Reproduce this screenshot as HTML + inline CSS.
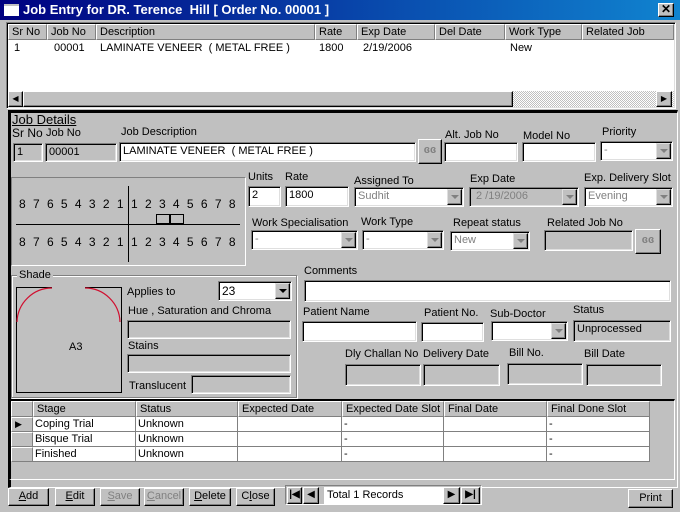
<!DOCTYPE html>
<html><head><meta charset="utf-8"><style>
*{box-sizing:border-box;margin:0;padding:0}
body{width:680px;height:512px;background:#c0c0c0;font-family:"Liberation Sans",Arial,sans-serif;font-size:11px;color:#000;position:relative;overflow:hidden}
.a{position:absolute;white-space:nowrap}
.f{position:absolute;background:#fff;border-top:1px solid #808080;border-left:1px solid #808080;border-right:1px solid #fff;border-bottom:1px solid #fff;box-shadow:inset 1px 1px 0 #000,inset -1px -1px 0 #dfdfdf;padding:2px 0 0 3px;font-size:11px;white-space:nowrap;overflow:hidden}
.g{background:#c0c0c0}
.b{position:absolute;background:#c0c0c0;border-top:1px solid #fff;border-left:1px solid #fff;border-right:1px solid #000;border-bottom:1px solid #000;box-shadow:inset -1px -1px 0 #808080;text-align:center;font-size:11px}
.cb{position:absolute;right:1px;top:1px;bottom:1px;width:15px;background:#c0c0c0;border-top:1px solid #dfdfdf;border-left:1px solid #dfdfdf;border-right:1px solid #000;border-bottom:1px solid #000;box-shadow:inset -1px -1px 0 #808080}
.cb:after{content:"";position:absolute;left:3px;top:5px;border-left:4px solid transparent;border-right:4px solid transparent;border-top:4px solid #808080}
.cb.k:after{border-top-color:#000}
.gr{color:#808080}
.h{position:absolute;background:#c0c0c0;border-top:1px solid #fff;border-left:1px solid #fff;border-right:1px solid #808080;border-bottom:1px solid #808080;padding:1px 0 0 3px;white-space:nowrap;overflow:hidden}
.c{position:absolute;border-right:1px solid #808080;border-bottom:1px solid #808080;background:#fff;padding:1px 0 0 2px;white-space:nowrap;overflow:hidden}
.tr{font-size:12px;letter-spacing:7.3px}
</style></head><body>
<div class="a" style="left:0;top:0;width:680px;height:20px;background:linear-gradient(90deg,#000080,#1084d0)"></div>
<div class="a" style="left:4px;top:4px;width:15px;height:12px;background:#fff;border-top:2px solid #c0c0c0"></div>
<div class="a" style="left:23px;top:2px;color:#fff;font-weight:bold;font-size:13px">Job Entry for DR. Terence&nbsp; Hill [ Order No. 00001 ]</div>
<div class="b" style="left:658px;top:3px;width:16px;height:14px;font-weight:bold;font-size:12px;line-height:11px">✕</div>
<div class="f" style="left:6px;top:22px;width:670px;height:87px;padding:0"></div>
<div class="h" style="left:8px;top:24px;width:39px;height:16px">Sr No</div>
<div class="h" style="left:47px;top:24px;width:49px;height:16px">Job No</div>
<div class="h" style="left:96px;top:24px;width:219px;height:16px">Description</div>
<div class="h" style="left:315px;top:24px;width:42px;height:16px">Rate</div>
<div class="h" style="left:357px;top:24px;width:78px;height:16px">Exp Date</div>
<div class="h" style="left:435px;top:24px;width:70px;height:16px">Del Date</div>
<div class="h" style="left:505px;top:24px;width:77px;height:16px">Work Type</div>
<div class="h" style="left:582px;top:24px;width:92px;height:16px">Related Job</div>
<div class="a" style="left:14px;top:42px">1</div>
<div class="a" style="left:54px;top:42px">00001</div>
<div class="a" style="left:100px;top:42px">LAMINATE VENEER&nbsp; ( METAL FREE )</div>
<div class="a" style="left:319px;top:42px">1800</div>
<div class="a" style="left:363px;top:42px">2/19/2006</div>
<div class="a" style="left:510px;top:42px">New</div>
<div class="a" style="left:8px;top:91px;width:666px;height:16px;background:repeating-conic-gradient(#c0c0c0 0 25%,#fff 0 50%) 0 0/2px 2px"></div>
<div class="b" style="left:8px;top:91px;width:15px;height:16px;font-size:8px;line-height:13px">◀</div>
<div class="b" style="left:23px;top:91px;width:490px;height:16px"></div>
<div class="b" style="left:656px;top:91px;width:16px;height:16px;font-size:8px;line-height:13px">▶</div>
<div class="a" style="left:8px;top:110px;width:670px;height:378px;border-top:3px solid #000;border-left:3px solid #000;border-right:1px solid #fff;border-bottom:1px solid #fff"></div>
<div class="a" style="left:12px;top:112px;font-size:13px;text-decoration:underline">Job Details</div>
<div class="a" style="left:12px;top:126px;font-size:12px">Sr No</div>
<div class="a" style="left:46px;top:127px">Job No</div>
<div class="f g" style="left:13px;top:143px;width:30px;height:19px">1</div>
<div class="f g" style="left:45px;top:143px;width:72px;height:19px">00001</div>
<div class="a" style="left:121px;top:126px">Job Description</div>
<div class="f" style="left:119px;top:142px;width:297px;height:20px">LAMINATE VENEER&nbsp; ( METAL FREE )</div>
<div class="b gr" style="left:418px;top:139px;width:24px;height:25px;line-height:21px;font-weight:bold">ɞɞ</div>
<div class="a" style="left:445px;top:129px">Alt. Job No</div>
<div class="f" style="left:444px;top:142px;width:74px;height:20px"></div>
<div class="a" style="left:523px;top:130px">Model No</div>
<div class="f" style="left:522px;top:142px;width:74px;height:20px"></div>
<div class="a" style="left:602px;top:126px">Priority</div>
<div class="f gr" style="left:600px;top:141px;width:73px;height:20px">-<div class="cb"></div></div>
<div class="a" style="left:11px;top:177px;width:235px;height:89px;border:1px solid #fff;border-top-color:#808080;border-left-color:#808080"></div>
<div class="a tr" style="left:19px;top:197px">87654321</div>
<div class="a tr" style="left:131px;top:197px">12345678</div>
<div class="a tr" style="left:19px;top:235px">87654321</div>
<div class="a tr" style="left:131px;top:235px">12345678</div>
<div class="a" style="left:16px;top:224px;width:224px;height:1px;background:#000"></div>
<div class="a" style="left:128px;top:186px;width:1px;height:76px;background:#000"></div>
<div class="a" style="left:156px;top:214px;width:14px;height:10px;border:1px solid #000"></div>
<div class="a" style="left:170px;top:214px;width:14px;height:10px;border:1px solid #000"></div>
<div class="a" style="left:248px;top:171px">Units</div>
<div class="f" style="left:248px;top:186px;width:33px;height:21px">2</div>
<div class="a" style="left:285px;top:171px">Rate</div>
<div class="f" style="left:285px;top:186px;width:64px;height:21px">1800</div>
<div class="a" style="left:354px;top:175px">Assigned To</div>
<div class="f gr" style="left:354px;top:187px;width:110px;height:20px">Sudhit<div class="cb"></div></div>
<div class="a" style="left:470px;top:173px">Exp Date</div>
<div class="f g gr" style="left:469px;top:187px;width:110px;height:20px;padding-left:6px">2 /19/2006<div class="cb"></div></div>
<div class="a" style="left:584px;top:172px">Exp. Delivery Slot</div>
<div class="f gr" style="left:584px;top:187px;width:89px;height:20px">Evening<div class="cb"></div></div>
<div class="a" style="left:252px;top:217px">Work Specialisation</div>
<div class="f gr" style="left:251px;top:230px;width:107px;height:20px">-<div class="cb"></div></div>
<div class="a" style="left:361px;top:216px">Work Type</div>
<div class="f gr" style="left:362px;top:230px;width:82px;height:20px">-<div class="cb"></div></div>
<div class="a" style="left:453px;top:217px">Repeat status</div>
<div class="f gr" style="left:450px;top:231px;width:80px;height:20px">New<div class="cb"></div></div>
<div class="a" style="left:547px;top:217px">Related Job No</div>
<div class="f g" style="left:544px;top:230px;width:89px;height:21px"></div>
<div class="b gr" style="left:635px;top:229px;width:26px;height:25px;line-height:21px;font-weight:bold">ɞɞ</div>
<div class="a" style="left:11px;top:275px;width:286px;height:123px;border:1px solid #808080;box-shadow:1px 1px 0 #fff,inset 1px 1px 0 #fff"></div>
<div class="a" style="left:17px;top:269px;background:#c0c0c0;padding:0 2px">Shade</div>
<div class="a" style="left:16px;top:287px;width:106px;height:106px;border:1px solid #000"></div>
<svg class="a" style="left:16px;top:287px" width="106" height="106"><path d="M1 35 A35 35 0 0 1 36 1 M69 1 A35 35 0 0 1 104 35" fill="none" stroke="#d01030" stroke-width="1.2"/><line x1="36" y1="0.5" x2="69" y2="0.5" stroke="#c0c0c0" stroke-width="1"/></svg>
<div class="a" style="left:69px;top:341px">A3</div>
<div class="a" style="left:127px;top:286px">Applies to</div>
<div class="f" style="left:218px;top:281px;width:74px;height:20px;font-size:12px">23<div class="cb k"></div></div>
<div class="a" style="left:128px;top:305px">Hue , Saturation and Chroma</div>
<div class="f g" style="left:127px;top:320px;width:164px;height:19px"></div>
<div class="a" style="left:128px;top:340px">Stains</div>
<div class="f g" style="left:127px;top:354px;width:164px;height:19px"></div>
<div class="a" style="left:129px;top:380px">Translucent</div>
<div class="f g" style="left:191px;top:375px;width:100px;height:19px"></div>
<div class="a" style="left:304px;top:265px">Comments</div>
<div class="f" style="left:304px;top:280px;width:367px;height:22px"></div>
<div class="a" style="left:303px;top:306px">Patient Name</div>
<div class="f" style="left:302px;top:321px;width:115px;height:21px"></div>
<div class="a" style="left:424px;top:307px">Patient No.</div>
<div class="f" style="left:421px;top:322px;width:63px;height:20px"></div>
<div class="a" style="left:490px;top:308px">Sub-Doctor</div>
<div class="f" style="left:491px;top:321px;width:77px;height:20px"><div class="cb"></div></div>
<div class="a" style="left:573px;top:304px">Status</div>
<div class="f g" style="left:573px;top:320px;width:98px;height:22px">Unprocessed</div>
<div class="a" style="left:345px;top:348px">Dly Challan No</div>
<div class="f g" style="left:345px;top:364px;width:76px;height:22px"></div>
<div class="a" style="left:423px;top:348px">Delivery Date</div>
<div class="f g" style="left:423px;top:364px;width:77px;height:22px"></div>
<div class="a" style="left:509px;top:347px">Bill No.</div>
<div class="f g" style="left:507px;top:363px;width:76px;height:22px"></div>
<div class="a" style="left:584px;top:348px">Bill Date</div>
<div class="f g" style="left:586px;top:364px;width:76px;height:22px"></div>
<div class="a" style="left:9px;top:399px;width:666px;height:81px;border-top:2px solid #000;border-left:2px solid #000;border-right:1px solid #fff;border-bottom:1px solid #fff"></div>
<div class="h" style="left:11px;top:401px;width:22px;height:16px"></div>
<div class="h" style="left:33px;top:401px;width:103px;height:16px">Stage</div>
<div class="h" style="left:136px;top:401px;width:102px;height:16px">Status</div>
<div class="h" style="left:238px;top:401px;width:104px;height:16px">Expected Date</div>
<div class="h" style="left:342px;top:401px;width:102px;height:16px">Expected Date Slot</div>
<div class="h" style="left:444px;top:401px;width:103px;height:16px">Final Date</div>
<div class="h" style="left:547px;top:401px;width:103px;height:16px">Final Done Slot</div>
<div class="h" style="left:11px;top:417px;width:22px;height:15px;font-size:9px;padding:1px 0 0 3px">▶</div>
<div class="h" style="left:11px;top:432px;width:22px;height:15px"></div>
<div class="h" style="left:11px;top:447px;width:22px;height:15px"></div>
<div class="c" style="left:33px;top:417px;width:103px;height:15px">Coping Trial</div>
<div class="c" style="left:136px;top:417px;width:102px;height:15px">Unknown</div>
<div class="c" style="left:238px;top:417px;width:104px;height:15px"></div>
<div class="c" style="left:342px;top:417px;width:102px;height:15px">-</div>
<div class="c" style="left:444px;top:417px;width:103px;height:15px"></div>
<div class="c" style="left:547px;top:417px;width:103px;height:15px">-</div>
<div class="c" style="left:33px;top:432px;width:103px;height:15px">Bisque Trial</div>
<div class="c" style="left:136px;top:432px;width:102px;height:15px">Unknown</div>
<div class="c" style="left:238px;top:432px;width:104px;height:15px"></div>
<div class="c" style="left:342px;top:432px;width:102px;height:15px">-</div>
<div class="c" style="left:444px;top:432px;width:103px;height:15px"></div>
<div class="c" style="left:547px;top:432px;width:103px;height:15px">-</div>
<div class="c" style="left:33px;top:447px;width:103px;height:15px">Finished</div>
<div class="c" style="left:136px;top:447px;width:102px;height:15px">Unknown</div>
<div class="c" style="left:238px;top:447px;width:104px;height:15px"></div>
<div class="c" style="left:342px;top:447px;width:102px;height:15px">-</div>
<div class="c" style="left:444px;top:447px;width:103px;height:15px"></div>
<div class="c" style="left:547px;top:447px;width:103px;height:15px">-</div>
<div class="b" style="left:8px;top:488px;width:41px;height:18px;line-height:15px"><u>A</u>dd</div>
<div class="b" style="left:55px;top:488px;width:40px;height:18px;line-height:15px"><u>E</u>dit</div>
<div class="b gr" style="left:100px;top:488px;width:40px;height:18px;line-height:15px"><u>S</u>ave</div>
<div class="b gr" style="left:144px;top:488px;width:40px;height:18px;line-height:15px"><u>C</u>ancel</div>
<div class="b" style="left:189px;top:488px;width:42px;height:18px;line-height:15px"><u>D</u>elete</div>
<div class="b" style="left:236px;top:488px;width:39px;height:18px;line-height:15px">C<u>l</u>ose</div>
<div class="a" style="left:285px;top:485px;width:197px;height:20px;border:1px solid #808080;border-right-color:#fff;border-bottom-color:#fff;background:#c0c0c0"></div>
<div class="b" style="left:287px;top:487px;width:15px;height:17px;font-size:10px;line-height:14px;font-weight:bold">|◀</div>
<div class="b" style="left:303px;top:487px;width:16px;height:17px;font-size:10px;line-height:14px">◀</div>
<div class="a" style="left:324px;top:487px;width:119px;height:17px;background:#fff;padding:2px 0 0 3px">Total 1 Records</div>
<div class="b" style="left:443px;top:487px;width:17px;height:17px;font-size:10px;line-height:14px">▶</div>
<div class="b" style="left:461px;top:487px;width:19px;height:17px;font-size:10px;line-height:14px;font-weight:bold">▶|</div>
<div class="b" style="left:628px;top:489px;width:45px;height:19px;line-height:16px">Print</div>
</body></html>
